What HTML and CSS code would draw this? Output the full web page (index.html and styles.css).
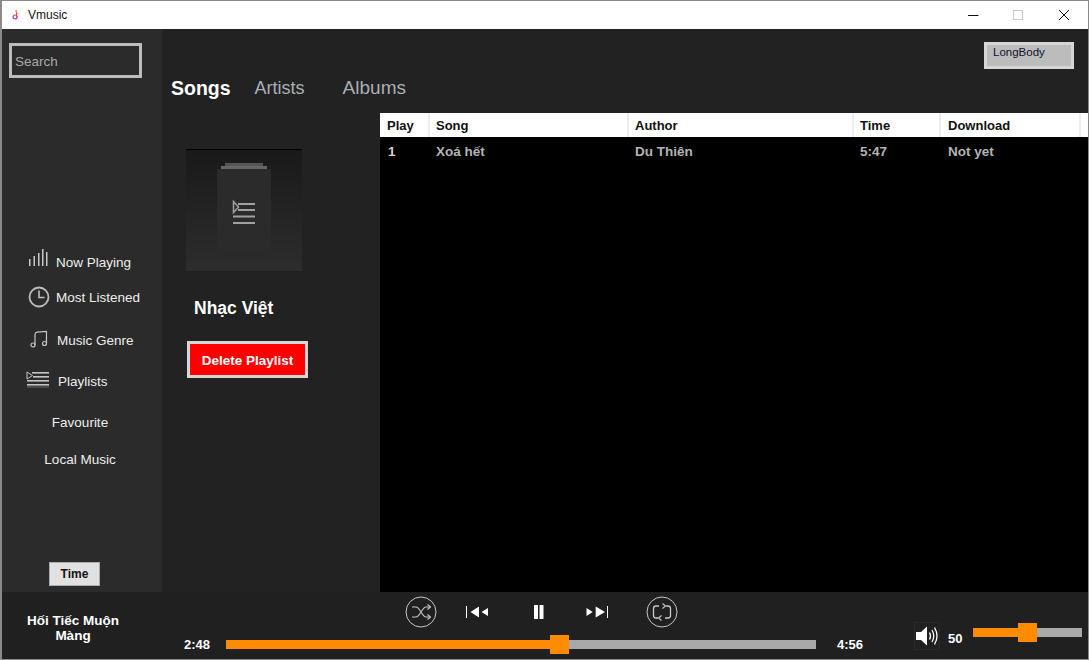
FILE: index.html
```html
<!DOCTYPE html>
<html lang="vi">
  <head>
    <meta charset="utf-8">
    <title>Vmusic</title>
    <link rel="stylesheet" href="styles.css">
  </head>

  <body>
    <div class="window">
      <div class="titlebar">
        <svg class="app-icon" width="10" height="12" viewBox="0 0 10 12">
          <path d="M5 1 L6 8" stroke="#e0307a" stroke-width="1" fill="none"/>
          <circle cx="4" cy="8" r="2" fill="none" stroke="#c03090" stroke-width="1.2"/>
          <path d="M5 3 L8 5" stroke="#f0a030" stroke-width="1"/>
        </svg>
        <span class="app-name">Vmusic</span>
        <div class="win-buttons">
          <div class="win-btn"><svg width="12" height="12" viewBox="0 0 12 12"><path d="M1 6.5H11.5" stroke="#111"/></svg></div>
          <div class="win-btn"><svg width="12" height="12" viewBox="0 0 12 12"><rect x="0.5" y="1.5" width="9" height="9" fill="none" stroke="#ccc"/></svg></div>
          <div class="win-btn"><svg width="12" height="12" viewBox="0 0 12 12"><path d="M0 1L10 11M10 1L0 11" stroke="#111"/></svg></div>
        </div>
      </div>

      <div class="middle">
        <div class="sidebar">
          <input class="search" type="text" placeholder="Search">
          <div class="nav">
            <div class="nav-item">
              <svg width="30" height="30" viewBox="0 0 30 30" fill="#c8c8c8">
                <rect x="3" y="12" width="1.5" height="7"/>
                <rect x="7.5" y="9" width="1.5" height="10"/>
                <rect x="12" y="6" width="1.5" height="13"/>
                <rect x="16" y="2" width="1.5" height="17"/>
                <rect x="20" y="5" width="1.5" height="14"/>
              </svg>
              <span>Now Playing</span>
            </div>
            <div class="nav-item listened">
              <svg width="30" height="30" viewBox="0 0 30 30" fill="none" stroke="#bdbdbd">
                <circle cx="13" cy="15" r="9.5" stroke-width="1.8"/>
                <path d="M13 8.5V15.5H18.5" stroke-width="1.6"/>
              </svg>
              <span>Most Listened</span>
            </div>
            <div class="nav-item genre">
              <svg width="30" height="30" viewBox="0 0 30 30" fill="none" stroke="#c4c4c4" stroke-width="1.2">
                <circle cx="7" cy="20" r="2"/>
                <circle cx="18.5" cy="18.5" r="2"/>
                <path d="M9 20V9.5Q9 7.5 11 7.2L20.5 6.5V18"/>
              </svg>
              <span>Music Genre</span>
            </div>
            <div class="nav-item lists">
              <svg width="30" height="30" viewBox="0 0 30 30" fill="#c4c4c4">
                <rect x="6" y="6" width="17" height="1.6"/>
                <rect x="7" y="10" width="16" height="1.6"/>
                <rect x="1" y="14" width="22" height="1.6"/>
                <rect x="1" y="18" width="22" height="1.6"/>
                <rect x="1" y="20.5" width="22" height="1" opacity=".4"/>
                <path d="M1 6L6.5 9.5L1 13Z" fill="none" stroke="#c4c4c4"/>
              </svg>
              <span>Playlists</span>
            </div>
            <div class="nav-item plain fav">Favourite</div>
            <div class="nav-item plain local">Local Music</div>
          </div>
          <button class="time-btn">Time</button>
        </div>

        <div class="content">
          <div class="topbar">
            <div class="skin-box">LongBody</div>
            <div class="tabs">
              <span class="tab active">Songs</span>
              <span class="tab artists">Artists</span>
              <span class="tab albums">Albums</span>
            </div>
          </div>

          <div class="content-body">
            <div class="playlist-info">
              <svg class="cover" width="116" height="122" viewBox="0 0 116 122">
                <defs>
                  <linearGradient id="coverBg" x1="0" y1="0" x2="0" y2="1">
                    <stop offset="0" stop-color="#191919"/>
                    <stop offset="1" stop-color="#2d2d2d"/>
                  </linearGradient>
                </defs>
                <rect width="116" height="122" fill="url(#coverBg)"/>
                <rect width="116" height="1" fill="#000"/>
                <rect x="39" y="14" width="38" height="3" fill="#555"/>
                <rect x="35" y="17" width="46" height="3" fill="#666"/>
                <rect x="31" y="20" width="54" height="83.5" fill="#2b2b2b"/>
                <rect x="52" y="54" width="17" height="2" fill="#a0a0a0"/>
                <rect x="52" y="60" width="17" height="2" fill="#a0a0a0"/>
                <rect x="47" y="66.5" width="22" height="2" fill="#a0a0a0"/>
                <rect x="47" y="73" width="22" height="2" fill="#a0a0a0"/>
                <path d="M47.5 52.5L52.5 58L47.5 63.5Z" fill="none" stroke="#a0a0a0" stroke-width="1.5"/>
              </svg>
              <div class="playlist-name">Nhạc Việt</div>
              <button class="delete-btn">Delete Playlist</button>
            </div>

            <div class="song-list">
              <table class="song-table">
                <colgroup>
                  <col class="col-play">
                  <col class="col-song">
                  <col class="col-author">
                  <col class="col-time">
                  <col class="col-download">
                  <col class="col-rest">
                </colgroup>
                <thead>
                  <tr>
                    <th>Play</th>
                    <th>Song</th>
                    <th>Author</th>
                    <th>Time</th>
                    <th class="download-cell">Download</th>
                    <th></th>
                  </tr>
                </thead>
                <tbody>
                  <tr>
                    <td class="row-num">1</td>
                    <td>Xoá hết</td>
                    <td>Du Thiên</td>
                    <td>5:47</td>
                    <td class="download-cell">Not yet</td>
                    <td></td>
                  </tr>
                </tbody>
              </table>
            </div>
          </div>
        </div>
      </div>

      <div class="footer">
        <div class="now-song">Hối Tiếc Muộn Màng</div>

        <div class="player">
          <div class="controls">
            <svg class="ctl" width="32" height="32" viewBox="0 0 32 32" fill="none" stroke="#c8c8c8">
              <circle cx="16" cy="16" r="15"/>
              <path d="M7 11H11C15 11 17 21 21 21H25M7 21H11C15 21 17 11 21 11H25" stroke-width="1.1"/>
              <path d="M22.5 8.5L25.5 11L22.5 13.5M22.5 18.5L25.5 21L22.5 23.5" stroke-width="1.1"/>
            </svg>
            <svg class="ctl prev" width="22" height="12" viewBox="0 0 22 12" fill="#fff">
              <rect width="1" height="12"/>
              <path d="M4.5 6L13 0.5V11.5Z"/>
              <path d="M15.5 6L22 2V10Z"/>
            </svg>
            <svg class="ctl pause" width="10" height="14" viewBox="0 0 10 14" fill="#fff">
              <rect width="4" height="14"/>
              <rect x="5.5" width="4" height="14"/>
            </svg>
            <svg class="ctl next" width="22" height="12" viewBox="0 0 22 12" fill="#fff">
              <path d="M0.5 2L6.7 6L0.5 10Z"/>
              <path d="M9.7 0.5L19 6L9.7 11.5Z"/>
              <rect x="21" width="1" height="12"/>
            </svg>
            <svg class="ctl repeat" width="32" height="32" viewBox="0 0 32 32" fill="none" stroke="#c8c8c8">
              <circle cx="16" cy="16" r="15"/>
              <path d="M13 10H10Q7.5 10 7.5 12.5V19.5Q7.5 22 10 22H12M19 22H22Q24.5 22 24.5 19.5V12.5Q24.5 10 22 10H20" stroke-width="1.3"/>
              <path d="M16.5 7.5L19.5 10L16.5 12.5M15.5 19.5L12.5 22L15.5 24.5" stroke-width="1.1"/>
            </svg>
          </div>
          <div class="progress-row">
            <span class="clock">2:48</span>
            <div class="slider seek">
              <div class="slider-fill" style="width: 56.6%"></div>
              <div class="slider-thumb" style="left: 56.6%"></div>
            </div>
            <span class="clock">4:56</span>
          </div>
        </div>

        <div class="volume">
          <div class="speaker">
            <svg width="24" height="22" viewBox="0 0 24 22" fill="none" stroke="#fff">
              <path d="M1 7H6L12 1.5V20.5L6 15H1Z" fill="#fff" stroke="none"/>
              <path d="M14.5 7.5Q16.5 11 14.5 14.5" stroke-width="1.3"/>
              <path d="M17 5Q20.5 11 17 17" stroke-width="1.3"/>
              <path d="M19.5 2.5Q24.5 11 19.5 19.5" stroke-width="1.3"/>
            </svg>
          </div>
          <span class="vol-num">50</span>
          <div class="slider vol-slider">
            <div class="slider-fill" style="width: 50%"></div>
            <div class="slider-thumb" style="left: 50%"></div>
          </div>
        </div>
      </div>
    </div>
  </body>
</html>
```

FILE: styles.css
```css
* {
  box-sizing: border-box;
}
html,
body {
  margin: 0;
  height: 100%;
  overflow: hidden;
}
body {
  font-family: "Liberation Sans", Arial, sans-serif;
  background: #fff;
}
.window {
  width: 1089px;
  height: 660px;
  display: flex;
  flex-direction: column;
  border-top: 1px solid #8a8a8a;
  border-bottom: 1px solid #8a8a8a;
  border-left: 2px solid #8a8a8a;
  border-right: 1px solid #8a8a8a;
}

/* title bar */
.titlebar {
  height: 28px;
  flex: none;
  display: flex;
  align-items: center;
  background: #fff;
  padding-left: 9px;
}
.app-icon {
  flex: none;
}
.app-name {
  margin-left: 7px;
  font-size: 12px;
  color: #111;
}
.win-buttons {
  margin-left: auto;
  display: flex;
}
.win-btn {
  width: 46px;
  display: flex;
  justify-content: center;
  align-items: center;
}

.middle {
  flex: 1;
  display: flex;
  min-height: 0;
}

/* sidebar */
.sidebar {
  width: 160px;
  flex: none;
  display: flex;
  flex-direction: column;
  background: #2b2b2b;
}
.search {
  width: 133px;
  height: 35px;
  margin: 14px 0 0 7px;
  padding: 2px 0 0 3px;
  background: transparent;
  border: 3px solid #bdbdbd;
  border-radius: 0;
  font-family: inherit;
  font-size: 13.5px;
  color: #bbb;
}
.search::placeholder {
  color: #aaa;
  opacity: 1;
}
.nav {
  margin-top: 169px;
  display: flex;
  flex-direction: column;
}
.nav-item {
  height: 30px;
  flex: none;
  display: flex;
  align-items: center;
  padding-left: 24px;
  font-size: 13.5px;
  color: #eee;
  white-space: nowrap;
}
.nav-item svg {
  flex: none;
}
.listened {
  margin-top: 5px;
}
.genre {
  margin-top: 13px;
}
.genre span {
  margin-left: 1px;
}
.lists {
  margin-top: 11px;
}
.lists span {
  margin-left: 2px;
}
.plain {
  padding-left: 0;
  justify-content: center;
  width: 156px;
}
.fav {
  margin-top: 11px;
}
.local {
  margin-top: 7px;
}
.time-btn {
  width: 51px;
  height: 24px;
  margin: auto 0 6px 47px;
  padding: 0;
  background: #e1e1e1;
  border: 1px solid #adadad;
  border-radius: 0;
  font-family: inherit;
  font-size: 12px;
  font-weight: bold;
  color: #111;
}

/* main area */
.content {
  flex: 1;
  min-width: 0;
  display: flex;
  flex-direction: column;
  background: #222;
}
.topbar {
  height: 84px;
  flex: none;
  display: flex;
  flex-direction: column;
}
.skin-box {
  align-self: flex-end;
  width: 90px;
  height: 27px;
  margin: 13px 14px 0 0;
  padding: 0 0 0 6px;
  background: #bcbcbc;
  border: 3px solid #d6d6d6;
  font-size: 11.5px;
  line-height: 14px;
  color: #111133;
}
.tabs {
  margin-top: 7px;
  padding-left: 9px;
  display: flex;
  line-height: 24px;
}
.tab {
  font-size: 18px;
  color: #aab0b6;
}
.tab.active {
  font-size: 19.5px;
  font-weight: bold;
  color: #fff;
}
.artists {
  margin-left: 24px;
}
.tab.albums {
  margin-left: 38px;
  font-size: 19px;
}

.content-body {
  flex: 1;
  min-height: 0;
  display: flex;
}
.playlist-info {
  width: 218px;
  flex: none;
  display: flex;
  flex-direction: column;
  align-items: flex-start;
}
.cover {
  display: block;
  margin: 36px 0 0 24px;
}
.playlist-name {
  margin: 27px 0 0 32px;
  font-size: 17.5px;
  font-weight: bold;
  line-height: 20px;
  color: #fff;
}
.delete-btn {
  width: 121px;
  height: 37px;
  margin: 23px 0 0 25px;
  padding: 1px 0 0;
  background: #f00;
  border: 3px solid #d6d6d6;
  border-radius: 0;
  font-family: inherit;
  font-size: 13.5px;
  font-weight: bold;
  color: #fff;
}

/* song table */
.song-list {
  flex: 1;
  min-width: 0;
  background: #000;
}
.song-table {
  width: 100%;
  table-layout: fixed;
  border-collapse: separate;
  border-spacing: 0;
  font-weight: bold;
}
.col-play { width: 50px; }
.col-song { width: 199px; }
.col-author { width: 225px; }
.col-time { width: 87px; }
.col-download { width: 140px; }
.song-table th {
  height: 24px;
  padding: 0 0 0 6px;
  background: #fff;
  border-right: 2px solid #eee;
  font-size: 13px;
  text-align: left;
  color: #111;
}
.song-table th:first-child {
  padding-left: 7px;
}
.song-table th:last-child {
  border-right: none;
}
.song-table td {
  height: 28px;
  padding: 0 0 0 6px;
  font-size: 13.5px;
  color: #b4b4b4;
}
.song-table td.row-num {
  padding-left: 8px;
  color: #d0d0d0;
}
.song-table .download-cell {
  padding-left: 7px;
}

/* bottom player */
.footer {
  height: 67px;
  flex: none;
  display: flex;
  background: #202020;
}
.now-song {
  width: 142px;
  flex: none;
  padding: 21px 20px 0;
  text-align: center;
  font-size: 13.5px;
  font-weight: bold;
  line-height: 15px;
  color: #fff;
}
.player {
  flex: 1;
  min-width: 0;
  padding: 4px 0 0 40px;
}
.controls {
  display: flex;
  align-items: center;
  height: 32px;
  margin-left: 221px;
}
.ctl {
  flex: none;
  display: block;
}
.prev {
  margin-left: 29px;
}
.pause {
  margin-left: 46px;
}
.next {
  margin-left: 42px;
}
.repeat {
  margin-left: 38px;
}
.progress-row {
  display: flex;
  align-items: center;
  height: 19px;
  margin-top: 7px;
}
.clock {
  width: 26px;
  flex: none;
  margin-top: -1px;
  font-size: 13px;
  font-weight: bold;
  color: #fff;
}
.slider {
  position: relative;
  height: 9px;
  background: #a9a9a9;
}
.seek {
  width: 590px;
  margin: 0 21px 0 16px;
}
.slider-fill {
  height: 100%;
  background: #ff8c00;
}
.slider-thumb {
  position: absolute;
  top: -5px;
  width: 19px;
  height: 19px;
  margin-left: -9.5px;
  background: #ff8c00;
}

.volume {
  width: 174px;
  flex: none;
  display: flex;
  align-items: flex-start;
  padding-top: 30px;
}
.speaker {
  width: 26px;
  height: 28px;
  flex: none;
  display: flex;
  align-items: center;
  justify-content: center;
  border: 1px solid #292929;
}
.vol-num {
  margin: 9px 0 0 8px;
  width: 25px;
  flex: none;
  font-size: 13px;
  font-weight: bold;
  color: #fff;
}
.vol-slider {
  width: 109px;
  margin-top: 6px;
}
```
